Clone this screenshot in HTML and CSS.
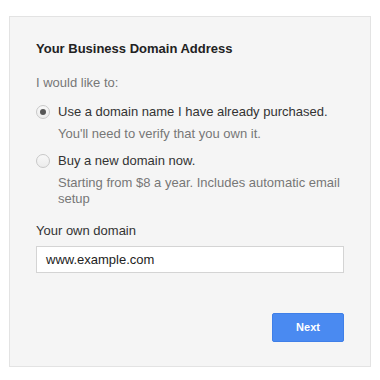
FILE: index.html
```html
<!DOCTYPE html>
<html>
<head>
<meta charset="utf-8">
<link rel="stylesheet" href="styles.css">
</head>
<body>
<div class="panel">
  <div class="title">Your Business Domain Address</div>
  <div class="intro">I would like to:</div>
  <div class="option opt1">
    <span class="radio checked"><span class="dot"></span></span>
    <span class="opt-text">Use a domain name I have already purchased.</span>
  </div>
  <div class="sub sub1">You'll need to verify that you own it.</div>
  <div class="option opt2">
    <span class="radio"></span>
    <span class="opt-text">Buy a new domain now.</span>
  </div>
  <div class="sub sub2">Starting from $8 a year. Includes automatic email setup</div>
  <div class="label">Your own domain</div>
  <div class="input">www.example.com</div>
  <div class="actions">
    <div class="btn">Next</div>
  </div>
</div>
</body>
</html>
```
FILE: styles.css
```css
html, body {
  margin: 0;
  padding: 0;
  background: #ffffff;
}
body {
  font-family: "Liberation Sans", Arial, sans-serif;
  font-size: 13px;
  line-height: 16px;
  color: #333;
}
.panel {
  margin: 16px 9px 0 9px;
  width: 362px;
  box-sizing: border-box;
  background: #f5f5f5;
  border: 1px solid #e3e3e3;
  padding: 24px 26px 24px 26px;
}
.title {
  font-weight: bold;
  color: #222;
}
.intro {
  margin-top: 18px;
  color: #777;
}
.option {
  display: flex;
  align-items: center;
  gap: 8px;
  color: #333;
}
.opt1 { margin-top: 13px; }
.opt2 { margin-top: 11px; }
.radio {
  width: 14px;
  height: 14px;
  box-sizing: border-box;
  border-radius: 50%;
  border: 1px solid #c8c8c8;
  background: linear-gradient(#f8f8f8, #ececec);
  display: flex;
  align-items: center;
  justify-content: center;
  flex: none;
}
.dot {
  width: 6px;
  height: 6px;
  border-radius: 50%;
  background: #555;
}
.sub {
  margin-top: 6px;
  padding-left: 22px;
  color: #777;
}
.label {
  margin-top: 16px;
  color: #333;
}
.input {
  margin-top: 7px;
  height: 27px;
  box-sizing: border-box;
  background: #fff;
  border: 1px solid #d4d4d4;
  padding: 4px 9px 0 9px;
  color: #222;
  line-height: 18px;
}
.actions {
  margin-top: 40px;
  display: flex;
  justify-content: flex-end;
}
.btn {
  width: 72px;
  height: 29px;
  box-sizing: border-box;
  background: #4a8af1;
  border: 1px solid #3f7fe8;
  border-radius: 2px;
  color: #fff;
  font-weight: bold;
  font-size: 11px;
  line-height: 27px;
  text-align: center;
}
```
